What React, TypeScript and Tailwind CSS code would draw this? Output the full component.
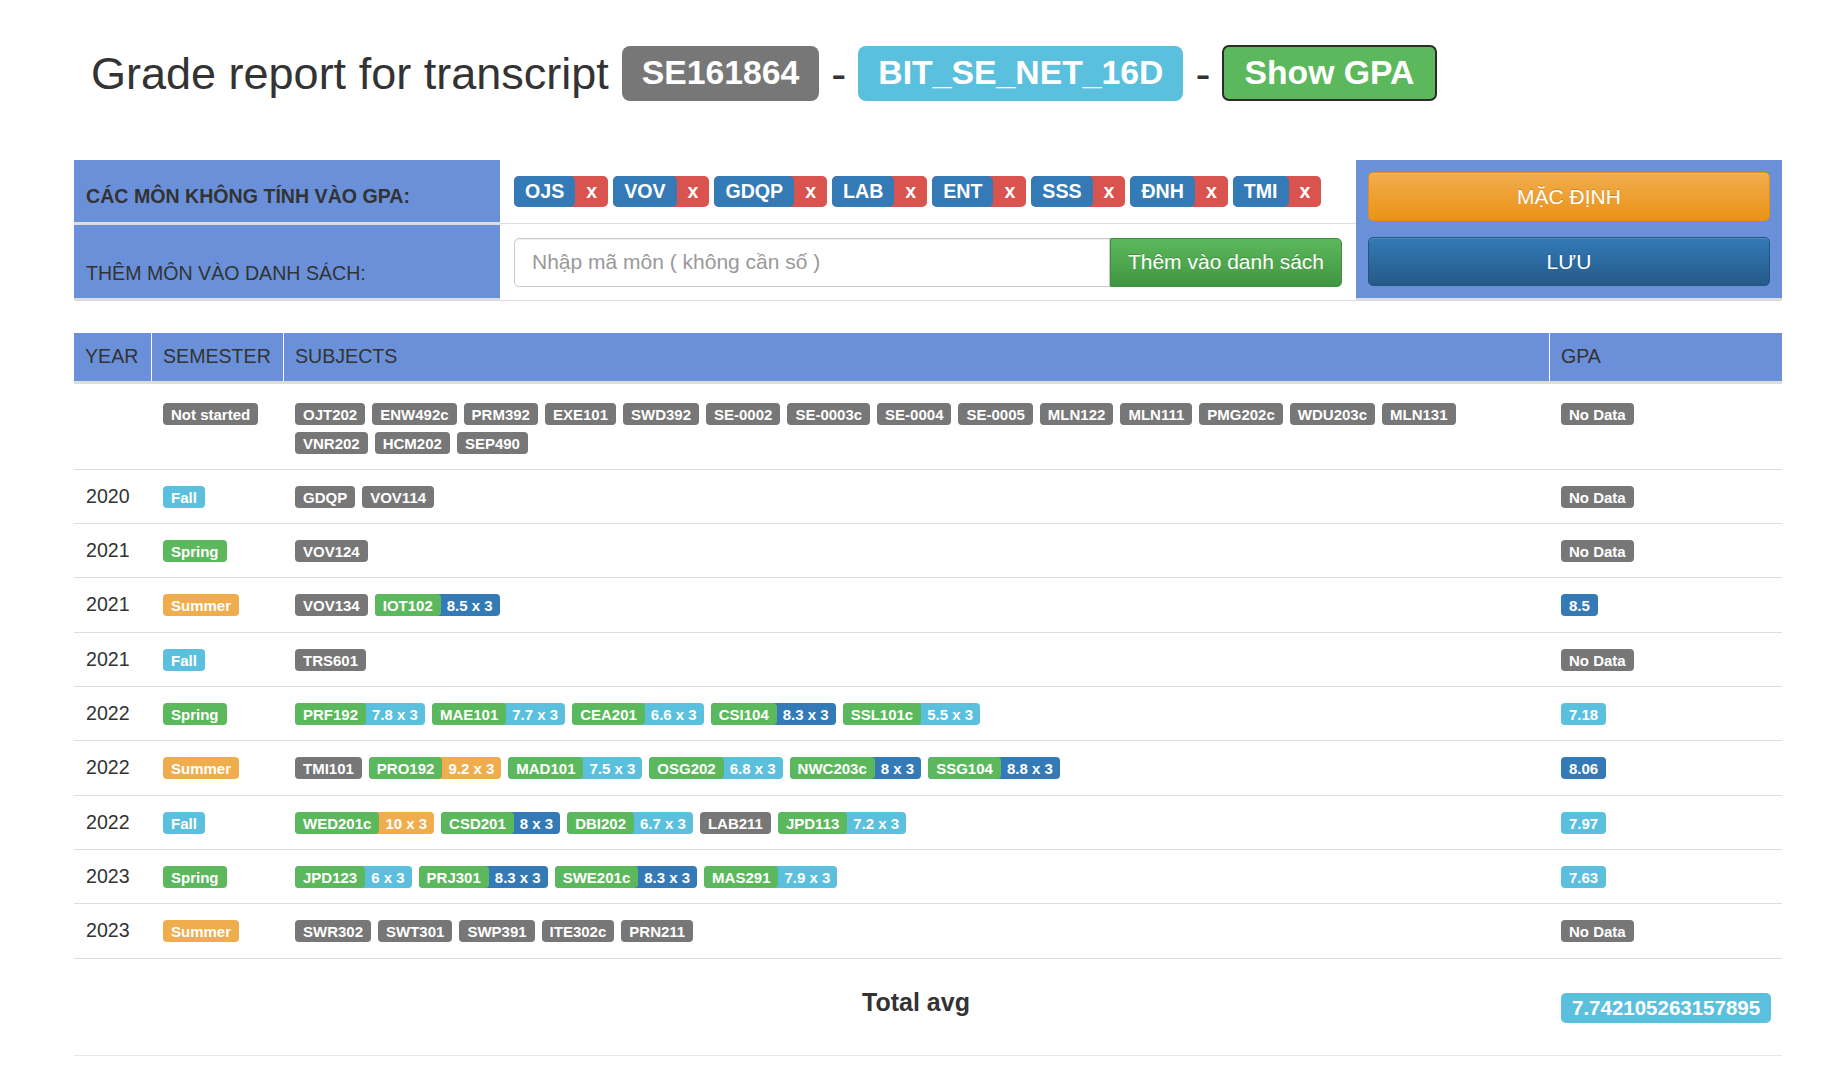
import React from "react";

const GRAY = "bg-[#777777]";
const GREEN = "bg-[#5cb85c]";
const INFO = "bg-[#5bc0de]";
const PRIMARY = "bg-[#337ab7]";
const WARN = "bg-[#f0ad4e]";

type Sub = { n: string; g?: string; c?: string };
type Row = { y: string; s: string; sc: string; subs: Sub[]; gpa: string; gc: string; first?: boolean };

const gs = (n: string): Sub => ({ n });
const gr = (n: string, g: string, c: string): Sub => ({ n, g, c });

const rows: Row[] = [
  {
    y: "",
    s: "Not started",
    sc: GRAY,
    first: true,
    subs: [
      "OJT202", "ENW492c", "PRM392", "EXE101", "SWD392", "SE-0002", "SE-0003c", "SE-0004", "SE-0005",
      "MLN122", "MLN111", "PMG202c", "WDU203c", "MLN131", "VNR202", "HCM202", "SEP490",
    ].map(gs),
    gpa: "No Data",
    gc: GRAY,
  },
  { y: "2020", s: "Fall", sc: INFO, subs: [gs("GDQP"), gs("VOV114")], gpa: "No Data", gc: GRAY },
  { y: "2021", s: "Spring", sc: GREEN, subs: [gs("VOV124")], gpa: "No Data", gc: GRAY },
  { y: "2021", s: "Summer", sc: WARN, subs: [gs("VOV134"), gr("IOT102", "8.5 x 3", PRIMARY)], gpa: "8.5", gc: PRIMARY },
  { y: "2021", s: "Fall", sc: INFO, subs: [gs("TRS601")], gpa: "No Data", gc: GRAY },
  {
    y: "2022",
    s: "Spring",
    sc: GREEN,
    subs: [
      gr("PRF192", "7.8 x 3", INFO),
      gr("MAE101", "7.7 x 3", INFO),
      gr("CEA201", "6.6 x 3", INFO),
      gr("CSI104", "8.3 x 3", PRIMARY),
      gr("SSL101c", "5.5 x 3", INFO),
    ],
    gpa: "7.18",
    gc: INFO,
  },
  {
    y: "2022",
    s: "Summer",
    sc: WARN,
    subs: [
      gs("TMI101"),
      gr("PRO192", "9.2 x 3", WARN),
      gr("MAD101", "7.5 x 3", INFO),
      gr("OSG202", "6.8 x 3", INFO),
      gr("NWC203c", "8 x 3", PRIMARY),
      gr("SSG104", "8.8 x 3", PRIMARY),
    ],
    gpa: "8.06",
    gc: PRIMARY,
  },
  {
    y: "2022",
    s: "Fall",
    sc: INFO,
    subs: [
      gr("WED201c", "10 x 3", WARN),
      gr("CSD201", "8 x 3", PRIMARY),
      gr("DBI202", "6.7 x 3", INFO),
      gs("LAB211"),
      gr("JPD113", "7.2 x 3", INFO),
    ],
    gpa: "7.97",
    gc: INFO,
  },
  {
    y: "2023",
    s: "Spring",
    sc: GREEN,
    subs: [
      gr("JPD123", "6 x 3", INFO),
      gr("PRJ301", "8.3 x 3", PRIMARY),
      gr("SWE201c", "8.3 x 3", PRIMARY),
      gr("MAS291", "7.9 x 3", INFO),
    ],
    gpa: "7.63",
    gc: INFO,
  },
  {
    y: "2023",
    s: "Summer",
    sc: WARN,
    subs: ["SWR302", "SWT301", "SWP391", "ITE302c", "PRN211"].map(gs),
    gpa: "No Data",
    gc: GRAY,
  },
];

const chips = ["OJS", "VOV", "GDQP", "LAB", "ENT", "SSS", "ĐNH", "TMI"];

function Label({ bg, children }: { bg: string; children: React.ReactNode }) {
  return (
    <span
      className={
        "inline-flex items-center h-[22px] px-[8px] rounded-[4px] text-[15px] font-bold text-white leading-none whitespace-nowrap " +
        bg
      }
    >
      {children}
    </span>
  );
}

function SubLabel({ s }: { s: Sub }) {
  if (!s.g) return <Label bg={GRAY}>{s.n}</Label>;
  return (
    <span
      className={
        "inline-flex h-[22px] rounded-[4px] text-[15px] font-bold text-white leading-none whitespace-nowrap " + s.c
      }
    >
      <span className="inline-flex items-center px-[8px] rounded-[4px] bg-[#5cb85c]">{s.n}</span>
      <span className="inline-flex items-center pl-[6px] pr-[7px]">{s.g}</span>
    </span>
  );
}

export default function App() {
  return (
    <div className="min-h-screen bg-white text-[#333] font-['Liberation_Sans',Arial,sans-serif]">
      {/* Title */}
      <div className="flex items-center h-[56px] mt-[45px] pl-[91px] whitespace-nowrap">
        <span className="text-[45px] leading-none text-[#333]">Grade report for transcript</span>
        <span className="ml-[13px] inline-flex items-center h-[55px] px-[20px] rounded-[8px] bg-[#777777] text-white font-bold text-[33.75px] leading-none">
          SE161864
        </span>
        <span className="mx-[12px] text-[45px] leading-none text-[#333]">-</span>
        <span className="inline-flex items-center h-[55px] px-[20px] rounded-[8px] bg-[#5bc0de] text-white font-bold text-[33.75px] leading-none">
          BIT_SE_NET_16D
        </span>
        <span className="mx-[12px] text-[45px] leading-none text-[#333]">-</span>
        <span className="inline-flex items-center h-[56px] px-[20px] rounded-[7px] border-[2px] border-[#2b2b2b] bg-[#5cb85c] text-white font-bold text-[33.75px] leading-none">
          Show GPA
        </span>
      </div>

      {/* Settings panel */}
      <div className="ml-[74px] w-[1708px] mt-[59px] grid grid-cols-[426px_1fr_426px]">
        <div className="flex flex-col">
          <div className="h-[65px] bg-[#6990d8] border-b-[3px] border-[#dddddd] flex items-end pb-[12px] pl-[12px] text-[19.6px] leading-[28px] font-bold">
            CÁC MÔN KHÔNG TÍNH VÀO GPA:
          </div>
          <div className="h-[76px] bg-[#6990d8] border-b-[3px] border-[#dddddd] flex items-end pb-[11px] pl-[12px] text-[19.6px] leading-[28px]">
            THÊM MÔN VÀO DANH SÁCH:
          </div>
        </div>
        <div className="flex flex-col">
          <div className="h-[64px] border-b border-[#dddddd] flex items-center pl-[14px] gap-[5px]">
            {chips.map((c) => (
              <span
                key={c}
                className="inline-flex h-[31px] rounded-[5px] bg-[#d9534f] text-white font-bold text-[19.6px] leading-none"
              >
                <span className="inline-flex items-center px-[11px] rounded-[5px] bg-[#337ab7]">{c}</span>
                <span className="inline-flex items-center px-[11px]">x</span>
              </span>
            ))}
          </div>
          <div className="h-[77px] border-b border-[#dddddd] flex items-center px-[14px]">
            <div className="flex w-full h-[49px]">
              <input
                className="flex-1 h-full border border-[#cccccc] rounded-l-[5px] pl-[17px] text-[21px] text-[#555] placeholder:text-[#999] shadow-[inset_0_1px_1px_rgba(0,0,0,0.075)] outline-none bg-white"
                placeholder="Nhập mã môn ( không cần số )"
              />
              <button className="w-[232px] h-full rounded-r-[5px] border border-[#3e8f3e] bg-[linear-gradient(to_bottom,#5cb85c,#419641)] text-white text-[21px] [text-shadow:0_-1px_0_rgba(0,0,0,0.2)]">
                Thêm vào danh sách
              </button>
            </div>
          </div>
        </div>
        <div className="h-[141px] bg-[#6990d8] border-b-[3px] border-[#dddddd] flex flex-col px-[12px] pt-[12px] gap-[16px]">
          <button className="h-[49px] w-full rounded-[5px] border border-[#e38d13] bg-[linear-gradient(to_bottom,#f0ad4e,#eb9316)] text-white text-[21px] shadow-[inset_0_1px_0_rgba(255,255,255,0.15)] [text-shadow:0_-1px_0_rgba(0,0,0,0.2)]">
            MẶC ĐỊNH
          </button>
          <button className="h-[49px] w-full rounded-[5px] border border-[#245580] bg-[linear-gradient(to_bottom,#337ab7,#265a88)] text-white text-[21px] shadow-[inset_0_1px_0_rgba(255,255,255,0.15)] [text-shadow:0_-1px_0_rgba(0,0,0,0.2)]">
            LƯU
          </button>
        </div>
      </div>

      {/* Main table */}
      <div className="ml-[74px] w-[1708px] mt-[32px]">
        <div className="grid grid-cols-[77px_132px_1fr_233px] h-[51px] bg-[#6990d8] border-b-[3px] border-[#dddddd] text-[19.6px] text-[#333]">
          <div className="flex items-center px-[11px]">YEAR</div>
          <div className="flex items-center px-[11px] border-l border-white">SEMESTER</div>
          <div className="flex items-center px-[11px] border-l border-white">SUBJECTS</div>
          <div className="flex items-center px-[11px] border-l border-white">GPA</div>
        </div>

        {rows.map((r, i) => (
          <div
            key={i}
            className={
              "grid grid-cols-[77px_132px_1fr_233px] items-start border-b border-[#dddddd] " +
              (r.first ? "pt-[19px] pb-[15px]" : i % 3 === 0 ? "pt-[16px] pb-[16px]" : "pt-[16px] pb-[15px]")
            }
          >
            <div className="flex items-center h-[22px] px-[12px] text-[19.6px] leading-none text-[#333]">{r.y}</div>
            <div className="flex px-[12px]">
              <Label bg={r.sc}>{r.s}</Label>
            </div>
            <div className="pl-[12px] pr-[28px] flex flex-wrap gap-x-[7px] gap-y-[7px]">
              {r.subs.map((s, j) => (
                <SubLabel key={j} s={s} />
              ))}
            </div>
            <div className="flex px-[12px]">
              <Label bg={r.gc}>{r.gpa}</Label>
            </div>
          </div>
        ))}

        <div className="grid grid-cols-[77px_132px_1fr_233px] items-start h-[97px] border-b border-[#e8e8e8]">
          <div />
          <div />
          <div className="pt-[28px] text-center text-[25px] leading-[30px] font-bold text-[#333]">Total avg</div>
          <div className="flex pt-[34px] px-[12px]">
            <span className="inline-flex items-center h-[30px] px-[11px] rounded-[5px] bg-[#5bc0de] text-white font-bold text-[20.5px] leading-none">
              7.742105263157895
            </span>
          </div>
        </div>
      </div>
    </div>
  );
}
